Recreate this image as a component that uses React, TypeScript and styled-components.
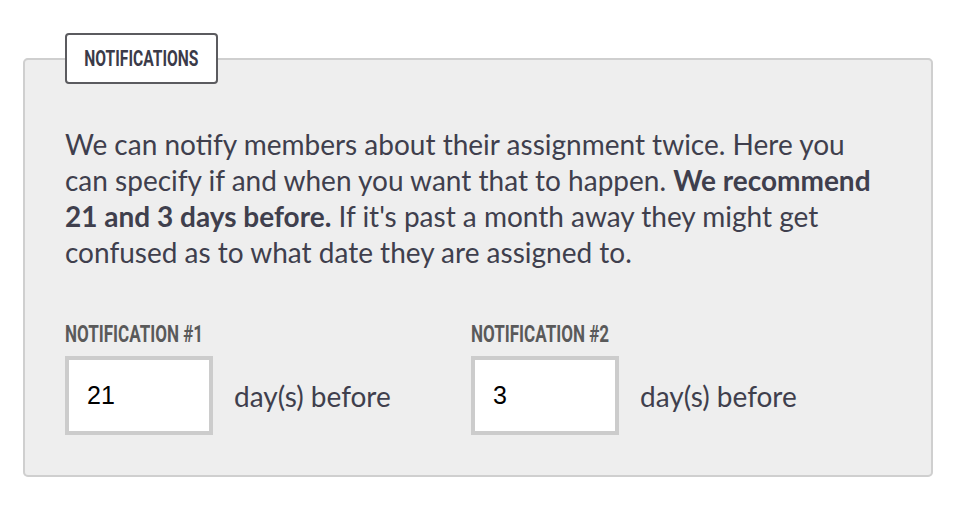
import React from "react";
import styled, { createGlobalStyle } from "styled-components";

const Global = createGlobalStyle`
  html, body { margin: 0; padding: 0; background: #ffffff; }
  body { font-family: Lato, "Open Sans", sans-serif; }
`;

const Page = styled.div`
  padding: 33px 25px 0 23px;
`;

const Box = styled.fieldset`
  margin: 0;
  width: 910px;
  box-sizing: border-box;
  background: #eeeeee;
  border: 2px solid #cfcfcf;
  border-radius: 5px;
  padding: 42px 40px 40px 40px;
`;

const Legend = styled.legend`
  box-sizing: border-box;
  width: 153px;
  height: 51px;
  padding: 0;
  background: #ffffff;
  border: 2px solid #5b5b5f;
  border-radius: 4px;
  display: flex;
  align-items: center;
  justify-content: center;
  overflow: visible;
`;

const Condensed = styled.span<{ $color: string; $size: number; $origin: string }>`
  display: inline-block;
  flex: none;
  white-space: nowrap;
  font-family: Roboto, "Liberation Sans", sans-serif;
  font-weight: 700;
  font-size: ${(p) => p.$size}px;
  line-height: 1;
  color: ${(p) => p.$color};
  transform: scaleX(0.71);
  transform-origin: ${(p) => p.$origin};
`;

const Intro = styled.p`
  margin: 0 0 52px 0;
  font-family: Lato, sans-serif;
  font-size: 28px;
  line-height: 36px;
  color: #3f3f4d;
  strong { font-weight: 700; }
`;

const Columns = styled.div`
  display: grid;
  grid-template-columns: 406px 1fr;
`;

const Field = styled.div`
  display: flex;
  flex-direction: column;
  gap: 10px;
`;

const Label = styled.label`
  display: block;
  height: 24px;
  line-height: 24px;
`;

const Row = styled.div`
  display: flex;
  align-items: center;
  gap: 21px;
`;

const Input = styled.input`
  box-sizing: border-box;
  width: 148px;
  height: 79px;
  border: 4px solid #cccccc;
  background: #ffffff;
  padding: 0 0 0 18px;
  font-family: "Liberation Sans", Arial, sans-serif;
  font-size: 25px;
  color: #000000;
  outline: none;
  margin: 0;
`;

const Suffix = styled.span`
  font-family: Lato, sans-serif;
  font-size: 28px;
  color: #3f3f4d;
`;

export default function App() {
  return (
    <Page>
      <Global />
      <Box>
        <Legend>
          <Condensed $color="#3b3b49" $size={22} $origin="center">
            NOTIFICATIONS
          </Condensed>
        </Legend>
        <Intro>
          We can notify members about their assignment twice. Here you can
          specify if and when you want that to happen.{" "}
          <strong>We recommend 21 and 3 days before.</strong> If it's past a
          month away they might get confused as to what date they are assigned
          to.
        </Intro>
        <Columns>
          <Field>
            <Label>
              <Condensed $color="#5a5a5a" $size={24} $origin="left center">
                NOTIFICATION #1
              </Condensed>
            </Label>
            <Row>
              <Input defaultValue="21" />
              <Suffix>day(s) before</Suffix>
            </Row>
          </Field>
          <Field>
            <Label>
              <Condensed $color="#5a5a5a" $size={24} $origin="left center">
                NOTIFICATION #2
              </Condensed>
            </Label>
            <Row>
              <Input defaultValue="3" />
              <Suffix>day(s) before</Suffix>
            </Row>
          </Field>
        </Columns>
      </Box>
    </Page>
  );
}
